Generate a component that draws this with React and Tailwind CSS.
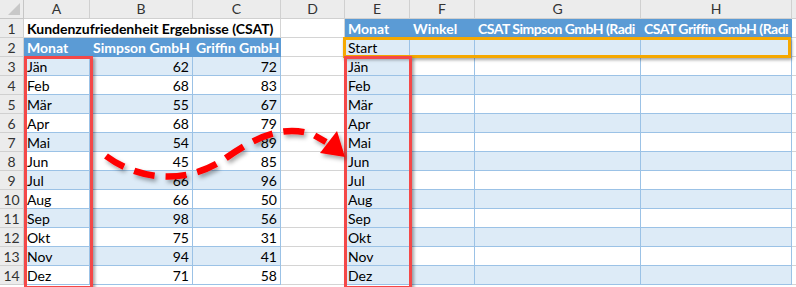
const cols = ['A', 'B', 'C', 'D', 'E', 'F', 'G', 'H']

const csat = [
  ['Jän', 62, 72],
  ['Feb', 68, 83],
  ['Mär', 55, 67],
  ['Apr', 68, 79],
  ['Mai', 54, 89],
  ['Jun', 45, 85],
  ['Jul', 66, 96],
  ['Aug', 66, 50],
  ['Sep', 98, 56],
  ['Okt', 75, 31],
  ['Nov', 94, 41],
  ['Dez', 71, 58],
]

const grid = 'grid grid-cols-[24px_66px_103px_88px_64px_65px_65px_166px_151px_1fr] auto-rows-[19px]'
const cell = 'border-r border-b overflow-hidden whitespace-nowrap leading-[19px] px-[3px]'
const plain = 'border-[#d4d4d4] bg-white'
const blueHead = 'bg-[#5b9bd5] border-[#5b9bd5] text-white font-bold'
const band = 'bg-[#ddebf7] border-[#9bc2e6]'
const white = 'bg-white border-[#9bc2e6]'

function ColHeader() {
  return (
    <>
      <div className="relative bg-[#ececec] border-r border-b border-[#c6c6c6]">
        <div className="absolute right-[3px] bottom-[3px] w-0 h-0 border-l-[12px] border-l-transparent border-b-[12px] border-b-[#c8c8c8]" />
      </div>
      {cols.map((c) => (
        <div key={c} className="bg-[#ececec] border-r border-b border-[#d0d0d0] text-center text-[14px] leading-[18px] text-[#333]">
          {c}
        </div>
      ))}
      <div className="bg-[#ececec] border-b border-[#d0d0d0]" />
    </>
  )
}

function RowNum({ n }) {
  return (
    <div className="bg-[#ececec] border-r border-b border-[#d0d0d0] text-center text-[14px] leading-[19px] text-[#333]">{n}</div>
  )
}

function DashedArrow() {
  return (
    <svg className="absolute left-0 top-0 pointer-events-none" width="796" height="287">
      <defs>
        <filter id="drop" x="-10%" y="-10%" width="130%" height="140%">
          <feDropShadow dx="2" dy="3" stdDeviation="2" floodColor="#000" floodOpacity="0.35" />
        </filter>
      </defs>
      <g filter="url(#drop)">
        <path
          d="M106 156 C138 180 186 186 226 158 C256 137 282 125 312 134 L326 142"
          fill="none"
          stroke="#ff0000"
          strokeWidth="6.5"
          strokeDasharray="21 11"
        />
        <polygon points="345,157 320,153 337,131" fill="#ff0000" />
      </g>
    </svg>
  )
}

export default function App() {
  return (
    <div className="relative w-[796px] h-[287px] overflow-hidden bg-white text-black font-['Lato','Liberation_Sans',sans-serif] text-[14px]">
      <div className={grid}>
        <ColHeader />

        {/* row 1 */}
        <RowNum n={1} />
        <div className={`${cell} col-span-3 border-[#d4d4d4] bg-white font-bold`}>Kundenzufriedenheit Ergebnisse (CSAT)</div>
        <div className={`${cell} ${plain}`} />
        <div className={`${cell} ${blueHead}`}>Monat</div>
        <div className={`${cell} ${blueHead}`}>Winkel</div>
        <div className={`${cell} ${blueHead} tracking-[-0.5px]`}>CSAT Simpson GmbH (Radi</div>
        <div className={`${cell} ${blueHead} tracking-[-0.5px]`}>CSAT Griffin GmbH (Radi</div>
        <div className={`${cell} ${plain}`} />

        {/* row 2 */}
        <RowNum n={2} />
        <div className={`${cell} ${blueHead}`}>Monat</div>
        <div className={`${cell} ${blueHead}`}>Simpson GmbH</div>
        <div className={`${cell} ${blueHead}`}>Griffin GmbH</div>
        <div className={`${cell} ${plain}`} />
        <div className={`${cell} ${band}`}>Start</div>
        <div className={`${cell} ${band}`} />
        <div className={`${cell} ${band}`} />
        <div className={`${cell} ${band}`} />
        <div className={`${cell} ${plain}`} />

        {csat.map(([m, s, g], i) => {
          const left = i % 2 === 0 ? band : white
          const right = i % 2 === 0 ? white : band
          return (
            <div key={m} className="contents">
              <RowNum n={i + 3} />
              <div className={`${cell} ${left}`}>{m}</div>
              <div className={`${cell} ${left} text-right`}>{s}</div>
              <div className={`${cell} ${left} text-right`}>{g}</div>
              <div className={`${cell} ${plain}`} />
              <div className={`${cell} ${band}`}>{m}</div>
              <div className={`${cell} ${right}`} />
              <div className={`${cell} ${right}`} />
              <div className={`${cell} ${right}`} />
              <div className={`${cell} ${plain}`} />
            </div>
          )
        })}
      </div>

      {/* start row highlight */}
      <div className="absolute left-[343px] top-[37px] w-[448px] h-[21px] border-[3px] border-[#f5a800] shadow-[1px_2px_3px_rgba(0,0,0,0.35)]" />

      {/* month column markers */}
      <div className="absolute left-[24px] top-[56px] w-[69px] h-[233px] border-[3px] border-[#f44848] shadow-[2px_2px_3px_rgba(0,0,0,0.35)]" />
      <div className="absolute left-[344px] top-[56px] w-[68px] h-[233px] border-[3px] border-[#f44848] shadow-[2px_2px_3px_rgba(0,0,0,0.35)]" />

      <DashedArrow />
    </div>
  )
}
